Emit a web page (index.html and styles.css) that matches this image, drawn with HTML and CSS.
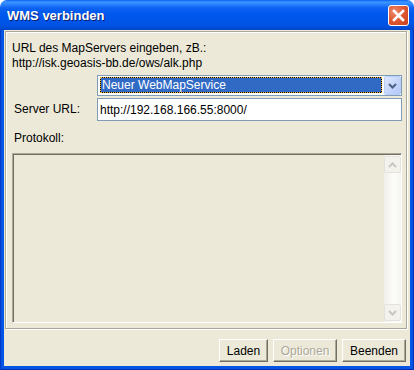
FILE: index.html
```html
<!DOCTYPE html>
<html lang="de">
<head>
<meta charset="utf-8">
<title>WMS verbinden</title>
<link rel="stylesheet" href="styles.css">
</head>
<body>
<div class="window">
	<div class="titlebar">
		<span class="title">WMS verbinden</span>
		<span class="close">
			<svg width="19" height="19" viewBox="0 0 19 19">
				<path d="M5 5 L14 14 M14 5 L5 14" stroke="#fff" stroke-width="2.6" stroke-linecap="square" fill="none"/>
			</svg>
		</span>
	</div>
	<div class="frame">
		<div class="client">
			<fieldset class="panel">
				<div class="intro">URL des MapServers eingeben, zB.:<br>http://isk.geoasis-bb.de/ows/alk.php</div>
				<div class="row row-combo">
					<span></span>
					<div class="combo">
						<span class="combo-value">Neuer WebMapService</span>
						<span class="combo-btn">
							<svg width="9" height="6" viewBox="0 0 9 6"><path d="M1 1 L4.5 4.5 L8 1" stroke="#4d6185" stroke-width="2" fill="none"/></svg>
						</span>
					</div>
				</div>
				<div class="row row-url">
					<label class="lbl">Server URL:</label>
					<input class="field" type="text" value="http://192.168.166.55:8000/">
				</div>
				<div class="lbl lbl-log">Protokoll:</div>
				<div class="log">
					<div class="scrollbar">
						<span class="sb-btn">
							<svg width="9" height="6" viewBox="0 0 9 6"><path d="M1 5 L4.5 1.5 L8 5" stroke="#c9c7be" stroke-width="2" fill="none"/></svg>
						</span>
						<span class="sb-btn">
							<svg width="9" height="6" viewBox="0 0 9 6"><path d="M1 1 L4.5 4.5 L8 1" stroke="#c9c7be" stroke-width="2" fill="none"/></svg>
						</span>
					</div>
				</div>
			</fieldset>
			<div class="buttons">
				<button class="btn btn-small">Laden</button>
				<button class="btn" disabled>Optionen</button>
				<button class="btn">Beenden</button>
			</div>
		</div>
	</div>
</div>
</body>
</html>
```

FILE: styles.css
```css
* {
	box-sizing: border-box;
}

body {
	margin: 0;
	background: #fff;
	font-family: "Liberation Sans", Arial, sans-serif;
	font-size: 12px;
	color: #000;
}

.window {
	width: 414px;
	height: 370px;
	display: flex;
	flex-direction: column;
}

/* title bar */
.titlebar {
	height: 30px;
	flex: none;
	display: flex;
	align-items: center;
	justify-content: space-between;
	padding: 0 5px 0 7px;
	border-radius: 7px 7px 0 0;
	background: linear-gradient(to bottom, #0a5fee 0, #3d95ff 2px, #2e86ff 4px, #0d62f2 8px, #0058ee 14px, #0055e8 22px, #0050dc 27px, #0043c6 30px);
}

.title {
	color: #fff;
	font-weight: bold;
	font-size: 13px;
	text-shadow: 1px 1px #0a1e6e;
	margin-top: 1px;
}

.close {
	width: 21px;
	height: 21px;
	margin-top: 1px;
	border: 1px solid #fff;
	border-radius: 3px;
	background: radial-gradient(circle at 30% 30%, #ec8b6e 0, #e05a36 45%, #c8401a 100%);
	display: flex;
	align-items: center;
	justify-content: center;
}

/* blue window frame */
.frame {
	flex: 1;
	padding: 0 4px 4px;
	background: #0055e5;
	box-shadow: inset 1px 0 #0838c8, inset -1px 0 #0030b8, inset 0 -1px #0030b0;
}

.client {
	height: 100%;
	background: #ece9d8;
	padding: 1px 3px 0 1px;
}

/* etched panel */
.panel {
	margin: 0;
	height: 298px;
	border: 1px solid #aca899;
	box-shadow: inset 1px 1px #fff, 1px 1px #fff;
	padding: 9px 4px 5px 6px;
}

.intro {
	line-height: 15px;
}

.row {
	display: grid;
	grid-template-columns: 85px 1fr;
	align-items: center;
}

.row-combo {
	margin-top: 4px;
}

.row-url {
	margin-top: 2px;
}

.lbl {
	padding-left: 2px;
	line-height: 15px;
}

.lbl-log {
	margin-top: 10px;
}

.combo {
	height: 21px;
	border: 1px solid #7f9db9;
	background: #fff;
	display: flex;
	align-items: flex-start;
	gap: 2px;
	padding-left: 2px;
}

.combo-value {
	flex: 1;
	height: 16px;
	margin-top: 1px;
	padding-left: 1px;
	line-height: 14px;
	color: #fff;
	border: 1px dotted #f0b030;
	background: linear-gradient(#316ac5, #316ac5) padding-box, #000 border-box;
}

.combo-btn {
	width: 17px;
	height: 19px;
	border: 1px solid #b9cdf7;
	border-radius: 2px;
	background: linear-gradient(to bottom right, #e0e9fe, #c1d3fb 60%, #b4c8f6);
	display: flex;
	align-items: center;
	justify-content: center;
}

.field {
	height: 23px;
	margin: 0;
	border: 1px solid #7f9db9;
	padding: 0 2px;
	font-family: "Liberation Sans", Arial, sans-serif;
	font-size: 12px;
	color: #000;
	background: #fff;
	outline: none;
}

/* log area */
.log {
	margin-top: 7px;
	height: 170px;
	display: flex;
	justify-content: flex-end;
	padding-top: 1px;
	border: 1px solid;
	border-color: #aca899 #fff #fff #aca899;
	box-shadow: inset 1px 1px #716f64;
}

.scrollbar {
	width: 17px;
	display: flex;
	flex-direction: column;
	justify-content: space-between;
	padding: 1px 0;
	background: linear-gradient(to right, #f0efe9, #fdfdfb 60%, #f6f5f0);
}

.sb-btn {
	width: 17px;
	height: 17px;
	border: 1px solid #e4e2da;
	border-radius: 2px;
	background: #f3f2ec;
	display: flex;
	align-items: center;
	justify-content: center;
}

/* dialog buttons */
.buttons {
	display: flex;
	justify-content: flex-end;
	gap: 5px;
	margin: 10px 1px 0 0;
}

.btn {
	width: 64px;
	height: 23px;
	padding: 0;
	border: 1px solid;
	border-color: #fff #716f64 #716f64 #fff;
	box-shadow: inset -1px -1px #aca899;
	background: #ece9d8;
	font-family: "Liberation Sans", Arial, sans-serif;
	font-size: 12px;
	color: #000;
}

.btn-small {
	width: 49px;
}

.btn:disabled {
	color: #aca899;
	text-shadow: 1px 1px #fff;
}
```
